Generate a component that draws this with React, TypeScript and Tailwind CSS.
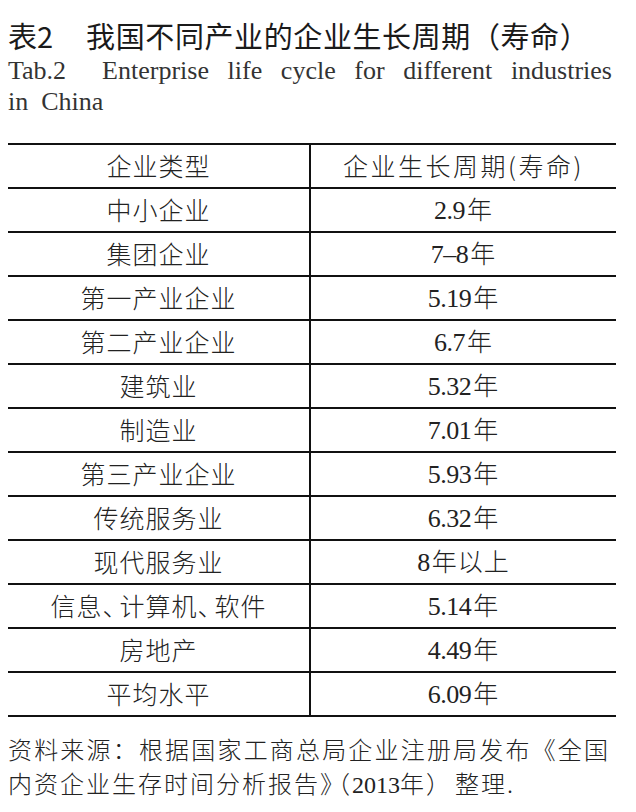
import React from "react";

const rows: [React.ReactNode, string][] = [
  ["中小企业", "2.9年"],
  ["集团企业", "7–8年"],
  ["第一产业企业", "5.19年"],
  ["第二产业企业", "6.7年"],
  ["建筑业", "5.32年"],
  ["制造业", "7.01年"],
  ["第三产业企业", "5.93年"],
  ["传统服务业", "6.32年"],
  ["现代服务业", "8年以上"],
  [
    <>
      信息<span className="tracking-[-8px]">、</span>计算机<span className="tracking-[-8px]">、</span>软件
    </>,
    "5.14年",
  ],
  ["房地产", "4.49年"],
  ["平均水平", "6.09年"],
];

function Val({ v }: { v: string }) {
  const m = v.match(/^([0-9.–]+)(.*)$/);
  if (!m) return <span>{v}</span>;
  return (
    <span className="flex items-baseline">
      <span className="[font-family:Liberation_Serif,serif] text-[26px] tracking-[-0.5px]">{m[1]}</span>
      <span className="[font-family:Noto_Sans_CJK_SC,sans-serif] font-light text-[25px] ml-[2px] tracking-[1px]">{m[2]}</span>
    </span>
  );
}

export default function App() {
  return (
    <div className="w-[636px] h-[812px] bg-white text-[#222] overflow-hidden">
      <div className="[font-family:Noto_Sans_CJK_SC,sans-serif] pt-[17px] pl-[8px] text-[29px] leading-[36px] font-normal text-[#1a1a1a] whitespace-nowrap">
        <span>表2</span>
        <span className="ml-[33px] tracking-[0.6px]">我国不同产业的企业生长周期（寿命）</span>
      </div>
      <div className="[font-family:Liberation_Serif,serif] mt-[2px] pl-[8px] pr-[24px] text-[26px] leading-[31px] text-[#333]">
        <div className="text-justify [text-align-last:justify] whitespace-nowrap">
          Tab.2<span className="inline-block w-[36px]"></span>Enterprise life cycle for different industries
        </div>
        <div>in&nbsp; China</div>
      </div>

      <div className="mt-[26px] ml-[8px] w-[608px] border-t-2 border-[#111]">
        <div className="flex h-[44px] border-b-2 border-[#111]">
          <div className="[font-family:Noto_Sans_CJK_SC,sans-serif] font-light w-[303px] border-r-2 border-[#111] flex items-center justify-center text-[25px] tracking-[1px]">
            企业类型
          </div>
          <div className="[font-family:Noto_Sans_CJK_SC,sans-serif] font-light flex-1 flex items-center justify-center text-[25px] tracking-[2.5px]">
            企业生长周期(寿命)
          </div>
        </div>
        {rows.map(([a, b]) => (
          <div key={b} className="flex h-[44px] border-b-2 border-[#111]">
            <div className="[font-family:Noto_Sans_CJK_SC,sans-serif] font-light w-[303px] border-r-2 border-[#111] flex items-center justify-center text-[25px] tracking-[1px]">
              {a}
            </div>
            <div className="flex-1 flex items-center justify-center">
              <Val v={b} />
            </div>
          </div>
        ))}
      </div>

      <div className="[font-family:Noto_Sans_CJK_SC,sans-serif] font-light mt-[15px] pl-[8px] pr-[26px] text-[24px] leading-[34px] tracking-[2px] text-[#222]">
        <div className="text-justify [text-align-last:justify] whitespace-nowrap">
          资料来源：根据国家工商总局企业注册局发布《全国
        </div>
        <div className="whitespace-nowrap">
          内资企业生存时间分析报告<span className="tracking-[-6px]">》</span>（<span className="[font-family:Liberation_Serif,serif] tracking-[0px]">2013</span>年）<span className="inline-block w-[3px]"></span>整理.
        </div>
      </div>
    </div>
  );
}
